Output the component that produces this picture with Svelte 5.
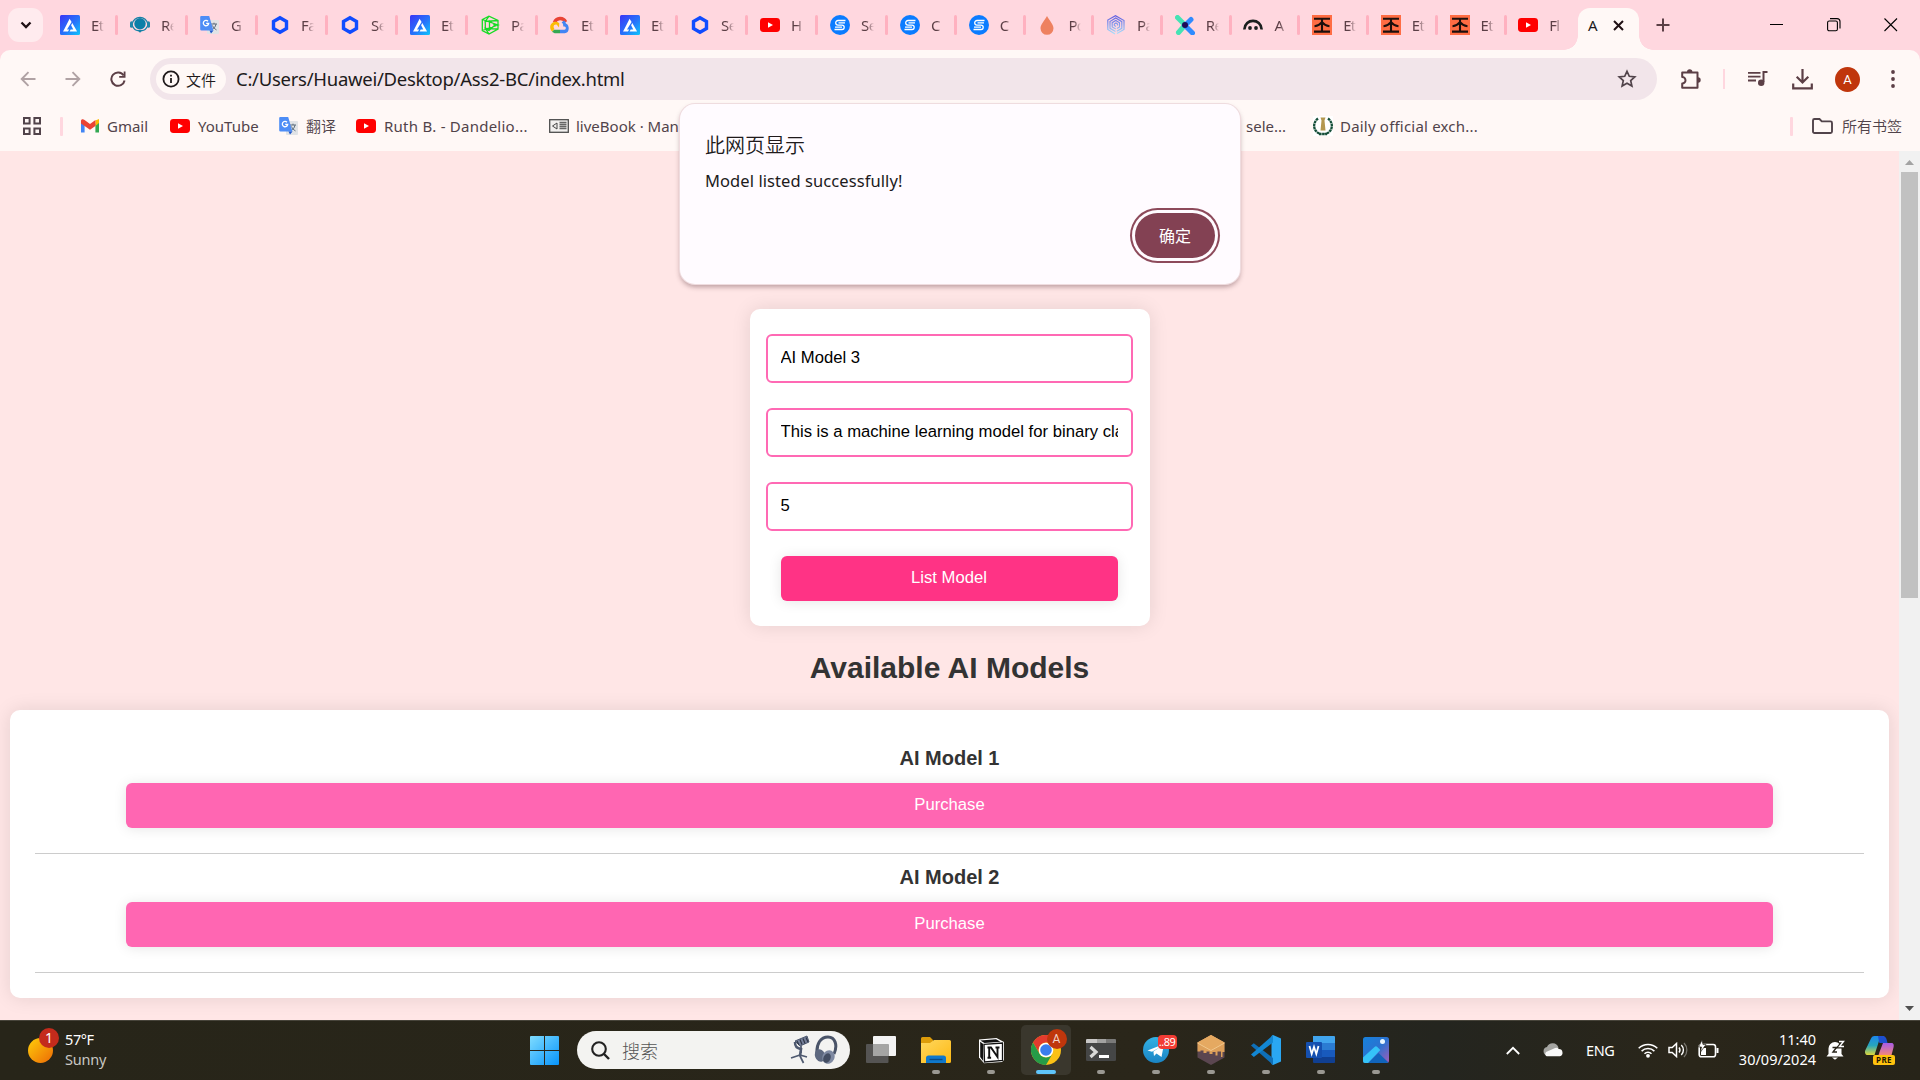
<script>
  const tabs = [
    ['alchemy', 'Et'], ['support', 'Re'], ['translate', 'G'], ['hex', 'Fa'], ['hex', 'Se'],
    ['alchemy', 'Et'], ['polyhedra', 'Pa'], ['cloud', 'Et'], ['alchemy', 'Et'], ['hex', 'Se'],
    ['youtube', 'H'], ['ess', 'Se'], ['ess', 'C'], ['ess', 'C'], ['drop', 'Po'], ['spiral', 'Pa'],
    ['cross', 'Re'], ['arch', 'A'], ['glyph', 'Et'], ['glyph', 'Et'], ['glyph', 'Et'], ['youtube', 'Fl']
  ];
  const models = ['AI Model 1', 'AI Model 2'];
  const apps = ['taskview', 'explorer', 'notion', 'chrome', 'terminal', 'telegram', 'block', 'vscode', 'word', 'photos'];
  let name = $state('AI Model 3');
  let description = $state('This is a machine learning model for binary classification');
  let price = $state('5');
</script>

{#snippet icon(kind)}
  <svg class="fav" viewBox="0 0 20 20">
    {#if kind === 'alchemy'}
      <defs><linearGradient id="alch" x1="0" y1="0" x2="1" y2="1"><stop offset="0" stop-color="#3a35f5" /><stop offset=".55" stop-color="#2673fb" /><stop offset="1" stop-color="#0cc8fb" /></linearGradient></defs>
      <rect width="20" height="20" rx="1.5" fill="url(#alch)" />
      <path d="M9.600 3.700l2 3.400-4.600 7.500h2.200l-1.200 1.900H3l1-1.800zM12.300 8.100l4.800 8.400H9.600l1.100-2h2.600l-2.200-4.300z" fill="#fff" />
    {:else if kind === 'support'}
      <path d="M2.200 9a7.900 7.900 0 0 1 15.600 0" fill="none" stroke="#1681a6" stroke-width="1.200" />
      <circle cx="10" cy="8.700" r="5.700" fill="#0c7fa8" />
      <rect x="0" y="6.300" width="3" height="6.400" rx="1.500" fill="#2187aa" /><rect x="17" y="6.300" width="3" height="6.400" rx="1.500" fill="#2187aa" />
      <path d="M2.800 11.500C4 14.500 6.500 15.500 8 15.600h4c1.500-.1 4-1.100 5.200-4.100" fill="none" stroke="#1681a6" stroke-width="1.200" /><path d="M7.200 15h5.600L10 17.800z" fill="#1681a6" />
    {:else if kind === 'translate'}
      <rect x="7" y="5" width="12" height="14" rx="1" fill="#e1e3e6" />
      <path d="M11 9h6M14 7.700V9M16 9c-.6 3-2 4.600-4 5.600M12.500 10.500c.8 2 2 3.200 4 4.400" fill="none" stroke="#5c6d7c" stroke-width="1" />
      <path d="M1.200 1h8l4.200 14.500H1.500A1.300 1.300 0 0 1 .2 14.200V2A1 1 0 0 1 1.200 1z" fill="#4d8df6" /><path d="M9.500 15.500h4L11 18.600z" fill="#2056c9" />
      <path d="M8 6.200A2.700 2.700 0 1 0 8.700 8.400H6.200" fill="none" stroke="#fff" stroke-width="1.300" />
    {:else if kind === 'hex'}
      <path d="M10 2.700l6.500 3.700v7.200L10 17.300l-6.500-3.700V6.400z" fill="none" stroke="#0f4bff" stroke-width="3.400" />
    {:else if kind === 'polyhedra'}
      <path d="M2.300 4.500L9 1.200l9 4.300v8.500l-9 5-6.700-3.500zM2.300 4.500L18 10 2.300 15.500M5.300 6.500v7L9 15.500l6-5.500-5.500-4zM9 1.200L5.300 6.500 18 5.500M9 19l-3.700-5.500L18 14M9.500 6v9" fill="none" stroke="#16dc24" stroke-width="1.300" />
    {:else if kind === 'cloud'}
      <path d="M4.500 7.500A6 6 0 0 1 15.600 7" fill="none" stroke="#e94335" stroke-width="3.500" /><path d="M14 5.500c1.500 1 1.700 2 1.900 3 4 1.400 4 9.700-1.200 9.700H10v-3.500h4.500c1.800 0 1.800-3 0-3.200h-1.200C13.400 8.800 12.300 8 11.600 7.600z" fill="#4285f4" />
      <path d="M4 14.700h6v3.500H5.600C4.400 18.200 3 17.600 2 16.700z" fill="#34a853" /><path d="M9 12.500L7 10C5.600 8.600 2 10.600 4.400 14l-2.300 2.600C-3 11.500 3 3.500 9.300 8.300z" fill="#fbbc05" />
    {:else if kind === 'youtube'}
      <rect y="3" width="20" height="14" rx="3.400" fill="#f00" /><path d="M8 7.200v5.600l5-2.800z" fill="#fff" />
    {:else if kind === 'ess'}
      <circle cx="10" cy="10" r="10" fill="#0b7cff" />
      <path d="M15.500 5.500H8a2.300 2.300 0 0 0 0 4.600h4a2.200 2.200 0 0 1 0 4.400H4.500M15 7.900H8.500M5 12.200h7" fill="none" stroke="#fff" stroke-width="1.300" />
    {:else if kind === 'drop'}
      <path d="M10 1c2 4 6.500 8.300 6.500 12.300a6.500 6.500 0 0 1-13 0C3.500 9.300 8 5 10 1z" fill="#ee8160" />
    {:else if kind === 'spiral'}
      <defs><linearGradient id="spi" x1="0" y1="0" x2="0" y2="1"><stop offset="0" stop-color="#605ce0" /><stop offset="1" stop-color="#a9e0fb" /></linearGradient></defs>
      <path d="M9 19L1.800 14.500V5L9.500.8 18 5.500v9L11 18.600M9.500 16.500L4 13.300V6.500L9.700 3 15.800 6.700v6.600l-5 3M9.800 14L6.200 12V7.700L9.800 5.500l3.700 2.300v4.200l-2.600 1.500M10 11.500L8.300 10.500V9L10 8l1.500 1v1.500" fill="none" stroke="url(#spi)" stroke-width="1.200" />
    {:else if kind === 'cross'}
      <path d="M2.500 2.500L10 10l-6.500 7.500" fill="none" stroke="#45e3b4" stroke-width="5" stroke-linecap="round" /><path d="M16 4.500L10 10.500l7.500 7.500" fill="none" stroke="#2f8bff" stroke-width="5" stroke-linecap="round" /><circle cx="10" cy="10" r="3" fill="#1d0b57" />
    {:else if kind === 'arch'}
      <path d="M1.300 14.500C2 3 18 3 18.700 14.500" fill="none" stroke="#1b1f1e" stroke-width="2.600" /><circle cx="7" cy="13" r="1.900" fill="#1b1f1e" /><circle cx="13" cy="13" r="1.900" fill="#1b1f1e" />
    {:else if kind === 'glyph'}
      <rect width="20" height="20" fill="#ff6c43" /><path d="M2 3.800h16M2 16.600h16M10 4v12.500M2.500 11.200c4-.4 6-2 7.500-4 1.500 2 3.500 3.600 7.500 4" fill="none" stroke="#1c0f0c" stroke-width="2.100" />
    {:else if kind === 'gmail'}
      <path d="M1 4.500v12h3.600V8" fill="#4285f4" /><path d="M19 4.500v12h-3.600V8" fill="#34a853" /><path d="M15.400 4.500L19 3v4l-3.600 3z" fill="#fbbc04" /><path d="M1 5c0-2 2-2.300 3.600-1L10 8l5.400-4v6L10 13.800 1 7.500z" fill="#ea4335" />
    {:else if kind === 'livebook'}
      <rect x=".7" y="3.700" width="18.600" height="12.600" fill="#f2f0ef" stroke="#4d4d4d" stroke-width="1.300" /><path d="M8 7v6L3.500 10z" fill="none" stroke="#444" /><path d="M10.500 6.500h7M10.500 8.500h7M10.500 10.500h7M10.500 12.500h7" stroke="#666" stroke-width="1.300" />
    {:else if kind === 'crest'}
      <rect width="20" height="20" fill="#fff" /><path d="M5 2.500C-1 7 0 16 8 18M15 2.500c6 4.500 5 13.500-3 15.500M6 18h8" fill="none" stroke="#164f39" stroke-width="2.300" stroke-dasharray="2.600 .5" /><path d="M7.500 1.500h5l-1 3 1 10h-5l1-10z" fill="#b4974f" />
    {/if}
  </svg>
{/snippet}

{#snippet appIcon(kind)}
  <svg class="app-svg" viewBox="0 0 30 30">
    {#if kind === 'taskview'}
      <rect x="7" y="1" width="23" height="20" rx="1" fill="#f3f3f3" /><rect y="9" width="22.500" height="19" rx="1" fill="#555453" /><rect x="7" y="9" width="15.500" height="12" fill="#a5a5a4" />
    {:else if kind === 'explorer'}
      <defs><linearGradient id="fold" x1="0" y1="0" x2="1" y2="1"><stop offset="0" stop-color="#ffd75e" /><stop offset="1" stop-color="#fdb913" /></linearGradient></defs>
      <path d="M0 3.500A1.500 1.500 0 0 1 1.500 2H9l3 3v5H0z" fill="#dd9c0a" /><path d="M0 8h9l4-3h15.500A1.500 1.500 0 0 1 30 6.500v20A1.500 1.500 0 0 1 28.500 28H0z" fill="url(#fold)" /><path d="M5 28v-5a2.500 2.500 0 0 1 2.500-2.500h15A2.500 2.500 0 0 1 25 23v5z" fill="#0f78cc" /><path d="M8.500 24.500h13" stroke="#0a4a85" stroke-width="1.400" />
    {:else if kind === 'notion'}
      <path d="M3 4.500L20.500 3 28 7v18l-2 2-18 1.300L3 22.500z" fill="#fff" /><path d="M4.300 5.500L20 4.300l4.500 2.500L8.500 8z" fill="#111" /><path d="M8 9.300L26.500 8v17.500L8.500 27z" fill="#fff" stroke="#111" stroke-width="1.300" /><path d="M4.200 6.800l3 2.300v17l-3-4z" fill="#111" /><path d="M11.500 12.500h3.500l6.500 9.500v-9.500M19.500 12.500h4M13.200 12.500v10M11.500 22.700h3.600" stroke="#111" stroke-width="1.900" fill="none" />
    {:else if kind === 'chrome'}
      <circle cx="15" cy="15" r="15" fill="#fbc116" /><path d="M2 7.500A15 15 0 0 1 28 7.500H15a7.500 7.500 0 0 0-6.500 11z" fill="#e33b2e" /><path d="M2 7.500l6.500 11.250A7.500 7.500 0 0 0 21.500 18.750L15 30A15 15 0 0 1 2 7.500z" fill="#269b48" /><circle cx="15" cy="15" r="7.300" fill="#fff" /><circle cx="15" cy="15" r="5.800" fill="#3b7ded" />
    {:else if kind === 'terminal'}
      <rect y="4" width="30" height="22" rx="1.300" fill="#454646" /><path d="M0 8V5.300A1.300 1.300 0 0 1 1.300 4H11v4z" fill="#c9c8c7" /><path d="M11 4h9v4h-9z" fill="#a2a2a1" /><path d="M20 4h8.700A1.300 1.300 0 0 1 30 5.300V8H20z" fill="#7a7a79" /><path d="M4.500 12l5.500 5-5.500 5" fill="none" stroke="#d9d9d8" stroke-width="3.200" /><path d="M13 21.500h10" stroke="#fff" stroke-width="3" />
    {:else if kind === 'telegram'}
      <defs><linearGradient id="tele" x1="0" y1="0" x2="0" y2="1"><stop offset="0" stop-color="#33b1e4" /><stop offset="1" stop-color="#1a84c4" /></linearGradient></defs>
      <circle cx="15" cy="15" r="13" fill="url(#tele)" /><path d="M6.500 15.500L23 9l-2.500 13-5-3.500-2.500 2.500-.6-4.500 7.600-5L11 16.700z" fill="#fff" />
    {:else if kind === 'block'}
      <path d="M1.500 7.500L15 0l13.500 7.500v15L15 30 1.500 22.500z" fill="#5b4650" /><path d="M1.500 7.500L15 0l13.500 7.500V17l-2 0v5h-1.500v-5.500h-3.500v4h-2v-3.500h-3v2h-3v-2.500h-3v1.500h-3v-2.500h-3v1h-3z" fill="#dda05a" /><path d="M1.500 7.500L15 0l13.500 7.500L15 15z" fill="#e5a961" /><path d="M1.500 8L15 15.500 28.500 8" fill="none" stroke="#f3c98d" />
    {:else if kind === 'vscode'}
      <path d="M22 0l8 3.500v23L22 30l-1.500-1V1z" fill="#2aa7f3" /><path d="M0 10.500l2.800-2.300L22 23v7L0 10.500z" fill="#0f6fb8" /><path d="M0 19.500L22 0v7.500L2.800 22z" fill="#1387d3" />
    {:else if kind === 'word'}
      <path d="M7 1h21a1 1 0 0 1 1 1v6H7z" fill="#41a5ee" /><path d="M7 8h22v7H7z" fill="#2b7cd3" /><path d="M7 15h22v7H7z" fill="#185abd" /><path d="M7 22h22v5a1 1 0 0 1-1 1H8a1 1 0 0 1-1-1z" fill="#103f91" /><rect y="7" width="16" height="16" rx="1" fill="#1550b0" /><path d="M3.500 11l2.200 8L8 12l2.300 7 2.200-8" fill="none" stroke="#fff" stroke-width="1.800" />
    {:else if kind === 'photos'}
      <defs><linearGradient id="pho" x1="0" y1="0" x2="1" y2="1"><stop offset="0" stop-color="#1682dc" /><stop offset=".5" stop-color="#2b72d0" /><stop offset="1" stop-color="#a25cb8" /></linearGradient></defs>
      <rect x="2" y="2" width="26" height="26" rx="2.500" fill="url(#pho)" /><path d="M7 28l10.500-10 10 9.500-1.500.5z" fill="#1164bb" /><path d="M2 22.500L13.500 12a2 2 0 0 1 2.800 0l3 3L7 28H4a2 2 0 0 1-2-2z" fill="#35c3f8" /><circle cx="21.500" cy="6.500" r="2.500" fill="#e9f6ff" />
    {/if}
  </svg>
{/snippet}

<div class="screen">
  <header class="tabstrip">
    <button class="tabsearch" aria-label="Search tabs"><svg width="12" height="8" viewBox="0 0 12 8"><path d="M1.500 1.500L6 6l4.500-4.500" fill="none" stroke="#1f1014" stroke-width="2.300" /></svg></button>
    <div class="tabs">
      {#each tabs as [kind, title], i}
        <div class="tab" class:narrow={i >= 12}>
          {@render icon(kind)}
          <span class="tabtitle">{title}</span>
          {#if i < tabs.length - 1}<i class="tabsep"></i>{/if}
        </div>
      {/each}
    </div>
    <div class="active">
      <span>A</span>
      <svg width="11" height="11" viewBox="0 0 11 11"><path d="M1 1l9 9M10 1l-9 9" stroke="#1f1014" stroke-width="2" /></svg>
    </div>
    <svg class="plus" width="14" height="14" viewBox="0 0 14 14"><path d="M7 .5v13M.5 7h13" stroke="#5c3f46" stroke-width="2" /></svg>
    <div class="window-controls">
      <svg width="14" height="14" viewBox="0 0 14 14"><path d="M0 6.500h13" stroke="#000" /></svg>
      <svg width="14" height="14" viewBox="0 0 14 14"><rect x=".6" y="3" width="9.800" height="9.800" rx="1.600" fill="none" stroke="#000" stroke-width="1.100" /><path d="M3 .6h7A3 3 0 0 1 13 3.600v7" fill="none" stroke="#000" stroke-width="1.100" /></svg>
      <svg width="14" height="14" viewBox="0 0 14 14"><path d="M.5.5l12.500 12.500M13 .5L.5 13" stroke="#000" stroke-width="1.100" /></svg>
    </div>
  </header>

  <section class="chrome">
    <div class="toolbar">
      <div class="nav">
        <svg width="16" height="16" viewBox="0 0 16 16"><path d="M15.500 8H2M8.500 1.200L1.700 8l6.800 6.800" fill="none" stroke="#b0a2a4" stroke-width="1.900" /></svg>
        <svg width="16" height="16" viewBox="0 0 16 16"><path d="M.5 8H14M7.500 1.200L14.300 8l-6.800 6.800" fill="none" stroke="#b0a2a4" stroke-width="1.900" /></svg>
        <svg width="16" height="16" viewBox="0 0 16 16"><path d="M13.700 4.500A6.700 6.700 0 1 0 14.600 9.500" fill="none" stroke="#5c3f46" stroke-width="2" /><path d="M15.500.5v6.300H9.200V5h4.500V.5z" fill="#5c3f46" /></svg>
      </div>
      <div class="omnibox">
        <div class="chip">
          <svg width="18" height="18" viewBox="0 0 18 18"><circle cx="9" cy="9" r="7.600" fill="none" stroke="#201a1b" stroke-width="1.800" /><path d="M9 8v5M9 4.800v1.800" stroke="#201a1b" stroke-width="1.800" /></svg>
          <span>文件</span>
        </div>
        <span class="url">C:/Users/Huawei/Desktop/Ass2-BC/index.html</span>
        <svg class="star" width="20" height="20" viewBox="0 0 20 20"><path d="M10 2.300l2.300 5 5.500.6-4.100 3.700 1.200 5.500L10 14.300l-4.900 2.800 1.200-5.500L2.200 7.900l5.500-.6z" fill="none" stroke="#51434a" stroke-width="1.700" /></svg>
      </div>
      <svg class="puzzle" width="22" height="22" viewBox="0 0 22 22"><path d="M2.200 4.500h15.300v15.300H2.200v-4.300a3 3 0 0 0 0-6.600z" fill="none" stroke="#5c3f46" stroke-width="2" stroke-linejoin="round" /><path d="M7 4a2.700 2.700 0 0 1 5.400 0zM18 9.300a2.700 2.700 0 0 1 0 5.400z" fill="#5c3f46" /></svg>
      <i class="toolsep"></i>
      <svg class="music" width="20" height="16" viewBox="0 0 20 16"><path d="M0 1.800h12.500M0 5.600h12.500M0 9.500h8" stroke="#5c3f46" stroke-width="1.800" /><path d="M19.500 1h-4v10" fill="none" stroke="#5c3f46" stroke-width="2" /><circle cx="13.200" cy="11.800" r="3.200" fill="#5c3f46" /></svg>
      <svg class="download" width="21" height="21" viewBox="0 0 21 21"><path d="M10.500 0v13M4.700 7.800l5.800 5.700 5.800-5.700M1.200 14.500v4.800h18.600v-4.800" fill="none" stroke="#5c3f46" stroke-width="2.200" /></svg>
      <span class="avatar">A</span>
      <svg class="kebab" width="4" height="18" viewBox="0 0 4 18"><circle cx="2" cy="2" r="1.900" fill="#5c3f46" /><circle cx="2" cy="9" r="1.900" fill="#5c3f46" /><circle cx="2" cy="16" r="1.900" fill="#5c3f46" /></svg>
    </div>
    <div class="bookmarks">
      <svg class="grid" width="18" height="18" viewBox="0 0 18 18"><path d="M1 1h5.600v5.600H1zM11.400 1H17v5.600h-5.600zM1 11.400h5.600V17H1zM11.400 11.400H17V17h-5.600z" fill="none" stroke="#51434a" stroke-width="2" /></svg>
      <i class="marksep"></i>
      <span class="mark m-gmail">{@render icon('gmail')}Gmail</span>
      <span class="mark m-yt">{@render icon('youtube')}YouTube</span>
      <span class="mark m-tr">{@render icon('translate')}<b class="cjk">翻译</b></span>
      <span class="mark m-ruth">{@render icon('youtube')}Ruth B. - Dandelio...</span>
      <span class="mark m-live">{@render icon('livebook')}liveBook · Manning</span>
      <span class="mark m-sele">sele...</span>
      <span class="mark m-daily">{@render icon('crest')}Daily official exch...</span>
      <span class="all"><i class="marksep"></i><svg width="21" height="16" viewBox="0 0 21 16"><path d="M1 2.500A1.500 1.500 0 0 1 2.500 1H7.500l2.300 2.400H18.500A1.500 1.500 0 0 1 20 4.900V13.500A1.500 1.500 0 0 1 18.500 15h-16A1.500 1.500 0 0 1 1 13.500z" fill="none" stroke="#51434a" stroke-width="1.900" /></svg><b class="cjk">所有书签</b></span>
    </div>
  </section>

  <div class="viewport">
    <main>
      <div class="form">
        <input bind:value={name} />
        <input bind:value={description} />
        <input bind:value={price} />
        <button class="list-btn">List Model</button>
      </div>
      <h2>Available AI Models</h2>
      <div class="list">
        {#each models as model}
          <div class="model">
            <h3>{model}</h3>
            <button class="buy">Purchase</button>
          </div>
        {/each}
      </div>
    </main>
    <div class="scrollbar">
      <svg width="21" height="21" viewBox="0 0 21 21"><path d="M6 14l4.500-5 4.500 5z" fill="#a3a3a3" /></svg>
      <div class="thumb"></div>
      <svg class="down" width="21" height="21" viewBox="0 0 21 21"><path d="M6 7l4.500 5L15 7z" fill="#505050" /></svg>
    </div>
  </div>

  <footer class="taskbar">
    <div class="weather">
      <div class="sun"><i>1</i></div>
      <div class="wtext"><span>57°F</span><span class="dim">Sunny</span></div>
    </div>
    <svg class="start" width="29" height="29" viewBox="0 0 29 29"><defs><linearGradient id="win" x1="0" y1="0" x2="1" y2="1"><stop offset="0" stop-color="#7fdcff" /><stop offset="1" stop-color="#0794fb" /></linearGradient></defs><path d="M1 0h13v14H0V1a1 1 0 0 1 1-1zM15 0h13a1 1 0 0 1 1 1v13H15zM0 15h14v14H1a1 1 0 0 1-1-1zM15 15h14v13a1 1 0 0 1-1 1H15z" fill="url(#win)" /></svg>
    <div class="search">
      <svg width="19" height="19" viewBox="0 0 19 19"><circle cx="8" cy="8" r="6.800" fill="none" stroke="#222" stroke-width="2.100" /><path d="M13 13l5 5" stroke="#222" stroke-width="2.400" /></svg>
      <span>搜索</span>
      <svg class="mic" width="48" height="30" viewBox="0 0 48 30"><g stroke="#4f5a70" fill="none"><path d="M5 6l12-5 2 6-9 4z" fill="#76809a" /><path d="M7 6l2 4M10 4.500l2 5M13 3.500l2 5M16 2.500l2 4.500" stroke="#2f3748" stroke-width="1.200" /><path d="M5 7c0 6 3 6 6 7l-1 7" stroke-width="2.600" /><path d="M11 11v7M10 20l-9 3M10 20l7 2M9.500 20l4 8" stroke-width="1.700" /></g><path d="M27 20C26 8 31 2 38 2s10 8 6 17" fill="none" stroke="#4a5468" stroke-width="3" /><ellipse cx="30" cy="20.500" rx="5" ry="6.500" transform="rotate(-20 30 20.500)" fill="#5e6980" /><ellipse cx="38.500" cy="22" rx="6" ry="7" transform="rotate(25 38.500 22)" fill="#7f8aa2" /><ellipse cx="37" cy="23" rx="3.500" ry="5" transform="rotate(25 37 23)" fill="#434d62" /></svg>
    </div>
    <div class="apps">
      {#each apps as kind}
        <div class="app" class:current={kind === 'chrome'}>
          {@render appIcon(kind)}
          {#if kind === 'chrome'}<i class="pin">A</i>{/if}
          {#if kind === 'telegram'}<i class="count">..89</i>{/if}
          {#if kind !== 'taskview'}<i class="dot"></i>{/if}
        </div>
      {/each}
    </div>
    <div class="tray">
      <svg class="t-up" width="14" height="9" viewBox="0 0 14 9"><path d="M.8 8L7 1.800 13.200 8" fill="none" stroke="#fff" stroke-width="1.800" /></svg>
      <svg class="t-cloud" width="20" height="14" viewBox="0 0 20 14"><path d="M4.500 12.500A4.300 4.300 0 0 1 4 4 6.200 6.200 0 0 1 15.500 4.500L12 9z" fill="#a5a5a2" /><path d="M3 13a3 3 0 0 1 0-4l8-3.500A4 4 0 0 1 16 6a3.700 3.700 0 0 1 1 7.200H4z" fill="#f8f8f8" /></svg>
      <span class="eng">ENG</span>
      <svg class="t-wifi" width="20" height="16" viewBox="0 0 20 16"><g fill="none" stroke="#fff" stroke-width="1.500"><path d="M.7 6.300a13 13 0 0 1 18.600 0M3.600 9.100a9 9 0 0 1 12.800 0M6.500 11.800a5 5 0 0 1 7 0" /></g><circle cx="10" cy="13.800" r="1.900" fill="#fff" /></svg>
      <svg class="t-vol" width="20" height="16" viewBox="0 0 20 16"><path d="M1 5.500h3.200L8.500 1.500v13L4.200 10.500H1z" fill="none" stroke="#fff" stroke-width="1.500" /><path d="M11 5.500a4 4 0 0 1 0 5M13.300 3a7 7 0 0 1 0 10" fill="none" stroke="#fff" stroke-width="1.400" /><path d="M16 1a10 10 0 0 1 0 14" fill="none" stroke="#77756e" stroke-width="1.300" /></svg>
      <svg class="t-bat" width="21" height="18" viewBox="0 0 21 18"><rect x="1.200" y="4.500" width="16.300" height="12.300" rx="2.300" fill="none" stroke="#fff" stroke-width="1.600" /><path d="M3 8h5v7H3zM18.500 8h2v5h-2z" fill="#fff" /><path d="M4 0L.5 7h3L2.500 12 8 4.500H5z" fill="#fff" stroke="#28251b" stroke-width=".7" /></svg>
      <div class="clock"><span>11:40</span><span>30/09/2024</span></div>
      <svg class="t-bell" width="18" height="20" viewBox="0 0 18 20"><path d="M1.500 14V8.500a6.500 6.500 0 0 1 13 0V14l2 2.500H-.5zM5 17.500h6l-3 2.300z" fill="#fff" /><path d="M12 1.500h4.500l-4 5h4" fill="none" stroke="#28251b" stroke-width="3.800" /><path d="M5.500 7.500H9.500L6 12h4" fill="none" stroke="#28251b" stroke-width="1.400" /><path d="M12 1.500h4.500l-4 5h4.500" fill="none" stroke="#fff" stroke-width="1.400" /></svg>
      <div class="copilot">
        <svg width="30" height="29" viewBox="0 0 30 29"><defs><linearGradient id="cpa" x1="0" y1="0" x2="0" y2="1"><stop offset="0" stop-color="#1b87ec" /><stop offset=".5" stop-color="#27a6bd" /><stop offset="1" stop-color="#dfd83a" /></linearGradient><linearGradient id="cpb" x1="0" y1="0" x2="0" y2="1"><stop offset="0" stop-color="#a85be8" /><stop offset="1" stop-color="#ff8d6b" /></linearGradient></defs><path d="M6 2.500A3.500 3.500 0 0 1 9.500 0H17c-2 1-2.500 3-3.500 6.500L9.500 19H3c-2.500 0-3.500-2-2.800-4.500z" fill="url(#cpa)" /><path d="M13 0h5c2.500 0 3.500 2 4.500 7h-5c-2 0-3 .5-3.500-1z" fill="#1d4fcf" /><path d="M18 7h8.500c2.500 0 2.500 2.500 2 4.500L26 21H11c2 0 3-2.500 3.500-5z" fill="url(#cpb)" /></svg>
        <i>PRE</i>
      </div>
    </div>
  </footer>

  <div class="dialog">
    <div class="dtitle">此网页显示</div>
    <div class="dmsg">Model listed successfully!</div>
    <button class="ok">确定</button>
  </div>
</div>

<style>
  :global(body) { margin: 0; overflow: hidden; }
  .screen { position: relative; width: 1920px; height: 1080px; display: flex; flex-direction: column; overflow: hidden; background: #ffd7df; font-family: "Noto Sans", "Noto Sans CJK SC", sans-serif; }
  .screen * { box-sizing: border-box; }
  button { border: 0; padding: 0; font-family: inherit; }
  i { font-style: normal; }
  svg { flex: none; display: block; }
  .fav { width: 20px; height: 20px; }
  .cjk { font: 350 15px/20px "Noto Sans CJK SC", sans-serif; padding-bottom: 1px; }

  .tabstrip { height: 50px; flex: none; display: flex; align-items: center; padding-left: 8px; }
  .tabsearch { width: 35px; height: 34px; border-radius: 11px; background: #ffebee; display: grid; place-items: center; margin-right: 17px; }
  .tabs { display: flex; width: 1518px; flex: none; }
  .tab { width: 70px; display: flex; align-items: center; flex: none; }
  .tab.narrow { width: 68.700px; }
  .tabtitle { width: 13px; margin-left: 11px; white-space: nowrap; font-size: 15px; line-height: 20px; letter-spacing: -0.6px; color: #5c3f46; mask-image: linear-gradient(90deg, #000 45%, transparent); }
  .tabsep { width: 3px; height: 20px; border-radius: 2px; background: #ffb1c0; margin-left: 11px; }
  .narrow .tabsep { margin-left: 10px; }
  .active { position: relative; align-self: flex-end; width: 61px; height: 42px; border-radius: 12px 12px 0 0; background: #fff8f6; display: flex; align-items: center; padding: 0 15px 8px 10px; justify-content: space-between; font-size: 15px; color: #201a1b; }
  .active::before, .active::after { content: ""; position: absolute; bottom: 0; width: 14px; height: 14px; }
  .active::before { left: -14px; background: radial-gradient(circle at 0 0, transparent 13.500px, #fff8f6 14px); }
  .active::after { right: -14px; background: radial-gradient(circle at 100% 0, transparent 13.500px, #fff8f6 14px); }
  .plus { margin-left: 17px; }
  .window-controls { margin-left: auto; display: flex; gap: 43px; padding-right: 22px; }

  .chrome { height: 101px; flex: none; background: #fff8f6; border-radius: 10px 10px 0 0; }
  .toolbar { height: 58px; display: flex; align-items: center; }
  .nav { display: flex; gap: 29px; width: 150px; padding-left: 20px; }
  .omnibox { width: 1507px; height: 42px; border-radius: 21px; background: #f2e5ea; display: flex; align-items: center; padding: 0 20px 0 6px; }
  .chip { width: 70px; height: 30px; border-radius: 15px; background: #fff8f6; display: flex; align-items: center; gap: 6px; padding-left: 6px; font: 350 15px "Noto Sans CJK SC", sans-serif; color: #201a1b; }
  .url { margin-left: 10px; padding-bottom: 2px; font-size: 18.500px; letter-spacing: -0.270px; color: #201a1b; }
  .star { margin-left: auto; }
  .puzzle { margin-left: 23px; }
  .toolsep { width: 2px; height: 20px; background: #ffd7df; margin-left: 21px; }
  .music { margin-left: 23px; }
  .download { margin-left: 24px; }
  .avatar { width: 25px; height: 25px; border-radius: 50%; background: #c0360c; color: #fff; font: 13px/25px Roboto, sans-serif; text-align: center; margin-left: 22px; }
  .kebab { margin-left: 31px; }
  .bookmarks { height: 36px; display: flex; align-items: center; padding-left: 23px; color: #51434a; font-size: 15px; }
  .marksep { width: 3px; height: 19px; background: #ffd7df; border-radius: 1px; flex: none; }
  .grid { margin-right: 19px; }
  .mark { display: flex; align-items: center; gap: 7px; white-space: nowrap; flex: none; }
  .m-gmail { margin-left: 17px; width: 90px; }
  .m-yt { width: 109px; gap: 8px; }
  .m-tr { width: 77px; }
  .m-ruth { width: 193px; gap: 8px; letter-spacing: .24px; }
  .m-live { width: 160px; margin-right: 537px; }
  .m-sele { width: 67px; }
  .m-daily { letter-spacing: .2px; }
  .all { margin-left: auto; display: flex; align-items: center; padding-right: 18px; }
  .all svg { margin: 0 9px 0 19px; }

  .viewport { height: 869px; flex: none; display: flex; background: #ffe6e6; }
  main { width: 1899px; padding: 158px 10px 0; display: flex; flex-direction: column; align-items: center; font-family: "Liberation Sans", sans-serif; }
  .form { width: 400px; height: 317px; background: #fff; border-radius: 10px; box-shadow: 0 0 19px rgba(0, 0, 0, .1); padding: 25px 17px 25px 16px; display: flex; flex-direction: column; gap: 25px; }
  input { width: 100%; height: 49px; border: 2px solid #ff69b4; border-radius: 6px; padding: 0 13px 1px; font: 16.670px "Liberation Sans", sans-serif; color: #000; outline: 0; background: #fff; }
  .list-btn, .buy { height: 45px; border-radius: 6px; color: #fff; font-size: 16.670px; padding-bottom: 1px; box-shadow: 0 1px 13px rgba(0, 0, 0, .1); }
  .list-btn { background: #ff3385; margin: 0 15px; }
  h2 { font-size: 30px; line-height: 34px; margin: 25px 0 25px; color: #333; }
  .list { width: 1879px; height: 288px; border-radius: 10px; background: #fff; box-shadow: 0 0 19px rgba(0, 0, 0, .1); padding: 25px; }
  .model { height: 119px; border-bottom: 1px solid #ccc; display: flex; flex-direction: column; align-items: center; padding-top: 12px; }
  h3 { font-size: 20px; line-height: 23px; margin: 0 0 13px; color: #333; }
  .buy { width: 1647px; background: #ff66b2; }
  .scrollbar { width: 21px; background: #f1f1f1; display: flex; flex-direction: column; align-items: center; }
  .thumb { width: 17px; height: 426px; background: #c1c1c1; }
  .down { margin-top: auto; }

  .taskbar { height: 60px; flex: none; background: linear-gradient(90deg, #272519, #2a261a 60%, #24251f 75%, #2a261a 88%, #272419); border-top: 1px solid #47443a; padding-bottom: 1px; display: flex; align-items: center; color: #fff; }
  .weather { width: 530px; display: flex; align-items: center; padding-left: 28px; }
  .sun { position: relative; width: 25px; height: 25px; border-radius: 50%; background: linear-gradient(135deg, #ffce0a, #ec6a05); }
  .sun i { position: absolute; left: 11px; top: -10px; width: 20px; height: 20px; border-radius: 50%; background: #c42b1c; font-size: 14px; line-height: 20px; text-align: center; }
  .wtext { display: flex; flex-direction: column; margin: 0 0 3px 12px; font-size: 14.500px; line-height: 20px; letter-spacing: -0.4px; }
  .dim { color: #c9c8c4; letter-spacing: -0.2px; }
  .search { width: 273px; height: 38px; margin-left: 18px; border-radius: 19px; background: #f3f3f1; display: flex; align-items: center; padding: 0 12px 0 14px; }
  .search span { margin-left: 12px; padding-bottom: 1px; font: 300 18px "Noto Sans CJK SC", sans-serif; color: #555; }
  .mic { margin-left: auto; }
  .apps { display: flex; margin-left: 3.500px; }
  .app { position: relative; width: 55px; height: 50px; display: grid; place-items: center; border-radius: 6px; }
  .app.current::before { content: ""; position: absolute; left: 2.500px; top: 0; width: 50px; height: 50px; border-radius: 5px; background: #3a372d; }
  .app-svg { position: relative; width: 30px; height: 30px; }
  .dot { position: absolute; left: 23px; bottom: 1px; width: 8px; height: 4px; border-radius: 2px; background: #9a9892; }
  .current .dot { left: 17px; width: 20px; background: #5fc5fb; }
  .pin { position: absolute; left: 28px; top: 4px; width: 20px; height: 20px; border-radius: 50%; background: #bf360c; color: #f2d5cb; font: 12px/20px Roboto, sans-serif; text-align: center; }
  .count { position: absolute; left: 29px; top: 10px; width: 19px; height: 14px; border-radius: 4px; background: #f23c34; font-size: 11px; line-height: 14px; letter-spacing: -0.5px; text-align: center; }
  .tray { margin-left: auto; display: flex; align-items: center; font-size: 15px; }
  .t-cloud { margin-left: 23px; }
  .eng { margin-left: 23px; width: 29px; padding-bottom: 1px; font-size: 14.500px; letter-spacing: -0.4px; }
  .t-wifi { margin-left: 23px; }
  .t-vol { margin-left: 10px; }
  .t-bat { margin-left: 10px; margin-bottom: 3px; }
  .clock { width: 97px; display: flex; flex-direction: column; align-items: flex-end; margin-bottom: 3px; line-height: 20px; font-size: 14.500px; letter-spacing: 0; }
  .t-bell { margin-left: 11px; overflow: visible; }
  .copilot { position: relative; margin: 0 25px 0 20px; }
  .copilot i { position: absolute; left: 8px; bottom: 0; width: 22px; height: 10px; border-radius: 2px; background: #ffc20e; color: #1b1500; font: 700 8px/10px "Noto Sans", sans-serif; letter-spacing: .4px; text-align: center; }

  .dialog { position: absolute; left: 680px; top: 104px; width: 560px; height: 180px; border-radius: 15px; background: #fffbff; box-shadow: 0 0 0 1px #efdcdf, 0 3px 5px rgba(60, 20, 30, .35); padding: 26px 25px; display: flex; flex-direction: column; color: #201a1b; }
  .dtitle { font: 350 20px/30px "Noto Sans CJK SC", sans-serif; }
  .dmsg { margin-top: 9px; font-size: 16.500px; line-height: 24px; letter-spacing: .08px; }
  .ok { align-self: flex-end; margin: 20px 0 0; width: 80px; height: 46px; padding-bottom: 1px; border-radius: 23px; background: #834153; color: #fff; font: 16px "Noto Sans CJK SC", sans-serif; box-shadow: 0 0 0 3px #fffbff, 0 0 0 5px #8d4a5b; }
</style>
